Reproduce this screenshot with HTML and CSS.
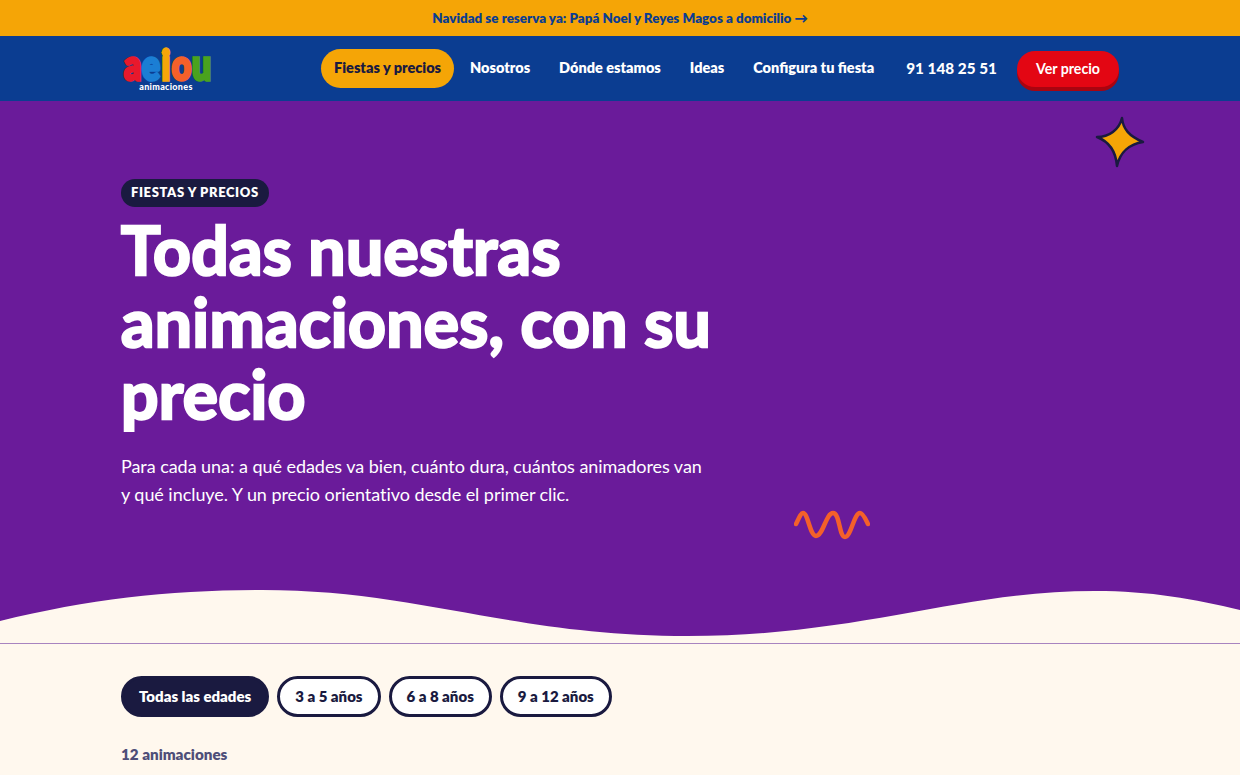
FILE: index.html
```html
<!DOCTYPE html>
<html lang="es">
<head>
  <meta charset="UTF-8" />
  <meta name="viewport" content="width=device-width, initial-scale=1.0"/>
  <title>Fiestas y precios</title>
  <link rel="stylesheet" href="styles.css">
</head>
<body>
  <div class="topbar">Navidad se reserva ya: Papá Noel y Reyes Magos a domicilio →</div>

  <header class="navbar">
    <div class="wrap nav-row">
      <a class="logo" href="#">
        <svg class="logo-star" viewBox="0 0 12 12"><path d="M6 0 C6.5 3.5 8 5 12 6 C8 7 6.5 8.500 6 12 C5.500 8.500 4 7 0 6 C4 5 5.500 3.500 6 0Z"/></svg>
        <span class="logo-word"><span class="l-a">a</span><span class="l-e">e</span><span class="l-i">i</span><span class="l-o">o</span><span class="l-u">u</span></span>
        <span class="logo-sub">animaciones</span>
      </a>
      <nav class="menu">
        <a class="menu-item active" href="#">Fiestas y precios</a>
        <a class="menu-item" href="#">Nosotros</a>
        <a class="menu-item" href="#">Dónde estamos</a>
        <a class="menu-item" href="#">Ideas</a>
        <a class="menu-item" href="#">Configura tu fiesta</a>
      </nav>
      <a class="phone" href="#">91 148 25 51</a>
      <a class="cta" href="#">Ver precio</a>
    </div>
  </header>

  <section class="hero">
    <svg class="star" viewBox="0 0 50 52"><path d="M27 2 C28 13 34 20 48 26 C35 28 25 36 22 50 C21 37 15 26 2 21 C14 21 24 14 27 2Z"/></svg>
    <svg class="squiggle" viewBox="0 0 76 30"><path d="M2 14 C5 8 7 3 9 3 C14 3 16 26 22 26 C29 26 32 3 39 3 C46 3 45 27 51 27 C57 27 60 3 66 3 C69 3 72 10 74 14"/></svg>
    <div class="wrap">
      <span class="tag">FIESTAS Y PRECIOS</span>
      <h1>Todas nuestras animaciones, con su precio</h1>
      <p class="lead">Para cada una: a qué edades va bien, cuánto dura, cuántos animadores van y qué incluye. Y un precio orientativo desde el primer clic.</p>
    </div>
    <svg class="wave" viewBox="0 0 1240 54" preserveAspectRatio="none"><path d="M0 32 C90 10 170 1 262 1 C420 1 510 47 688 47 C860 47 960 2 1095 2 C1150 2 1195 10 1240 21 V54 H0Z"/></svg>
  </section>

  <main class="wrap listing">
    <div class="filters">
      <button class="filter on">Todas las edades</button>
      <button class="filter">3 a 5 años</button>
      <button class="filter">6 a 8 años</button>
      <button class="filter">9 a 12 años</button>
    </div>
    <p class="count">12 animaciones</p>
  </main>
</body>
</html>
```

FILE: styles.css
```css
:root {
  --yellow: #f5a506;
  --blue: #0b3d91;
  --purple: #6a1b9a;
  --cream: #fff8ee;
  --ink: #1a1a40;
  --red: #e30613;
}
* {
  box-sizing: border-box;
}
html, body {
  height: 775px;
  overflow: hidden;
}
body {
  margin: 0;
  font-family: 'Lato', sans-serif;
  background: var(--cream);
  color: var(--ink);
}
a {
  color: inherit;
  text-decoration: none;
}
.wrap {
  width: 998px;
  margin-left: 121px;
}
.topbar {
  height: 36px;
  line-height: 36px;
  background: var(--yellow);
  color: var(--blue);
  text-align: center;
  font-size: 13.400px;
  font-weight: 800;
}
.navbar {
  height: 65px;
  background: var(--blue);
  color: #fff;
}
.nav-row {
  height: 100%;
  display: flex;
  align-items: center;
}
.logo {
  position: relative;
  width: 92px;
  height: 44px;
  margin-top: 2px;
  display: flex;
  flex-direction: column;
  align-items: center;
  flex: none;
}
.logo-star {
  position: absolute;
  top: 0;
  left: 40px;
  width: 9px;
  height: 9px;
  fill: var(--yellow);
}
.logo-word {
  display: flex;
  height: 32px;
  font-size: 42px;
  line-height: 32px;
  font-weight: 900;
  transform: scaleX(0.8);
}
.logo-word span {
  -webkit-text-stroke: 3.500px currentColor;
}
.l-a { color: #e8192c; }
.l-e { color: #1b7ed4; margin-left: 1px; }
.l-i { color: #f6a609; margin: 0 2px; }
.l-o { color: #f4602a; }
.l-u { color: #4aa21e; margin-left: 1px; }
.logo-sub {
  margin-top: 2px;
  margin-left: -2px;
  font-size: 9px;
  line-height: 10px;
  font-weight: 900;
  letter-spacing: 0.300px;
}
.menu {
  display: flex;
  align-items: center;
  gap: 3px;
  margin-left: 108px;
  flex: none;
}
.menu-item {
  height: 39px;
  line-height: 37px;
  padding: 0 13px;
  border-radius: 20px;
  font-size: 14.500px;
  font-weight: 800;
  white-space: nowrap;
}
.menu-item.active {
  background: var(--yellow);
  color: var(--ink);
}
.phone {
  margin-left: 19px;
  margin-bottom: 1px;
  font-size: 15.300px;
  font-weight: 900;
  white-space: nowrap;
}
.cta {
  margin-left: auto;
  width: 102px;
  height: 36px;
  line-height: 36px;
  text-align: center;
  border-radius: 18px;
  background: var(--red);
  box-shadow: 0 4px 0 #a90410;
  font-size: 14.200px;
  font-weight: 700;
}
.hero {
  position: relative;
  height: 543px;
  padding-top: 78px;
  background: var(--purple);
  border-bottom: 1px solid #a884c0;
  color: #fff;
}
.star {
  position: absolute;
  left: 1095px;
  top: 15px;
  width: 50px;
  height: 52px;
  fill: var(--yellow);
  stroke: var(--ink);
  stroke-width: 2.500;
  stroke-linejoin: round;
}
.squiggle {
  position: absolute;
  left: 794px;
  top: 409px;
  width: 76px;
  height: 30px;
  fill: none;
  stroke: #f4602a;
  stroke-width: 4.500;
  stroke-linecap: round;
}
.wave {
  position: absolute;
  left: 0;
  bottom: 0;
  width: 100%;
  height: 54px;
  fill: var(--cream);
}
.tag {
  display: inline-block;
  height: 28px;
  line-height: 27px;
  padding: 0 10px;
  border-radius: 14px;
  background: var(--ink);
  font-size: 13px;
  font-weight: 800;
  letter-spacing: 0.600px;
}
h1 {
  width: 620px;
  margin: 7px 0 0;
  font-size: 66px;
  line-height: 72px;
  font-weight: 700;
  letter-spacing: 0.300px;
  -webkit-text-stroke: 2.500px #fff;
}
.lead {
  width: 585px;
  margin: 22px 0 0;
  font-size: 18px;
  line-height: 28px;
  letter-spacing: -0.050px;
}
.listing {
  padding-top: 32px;
}
.filters {
  display: flex;
  gap: 8px;
}
.filter {
  height: 41px;
  padding: 0 15px 2px;
  border: 3px solid var(--ink);
  border-radius: 21px;
  background: #fff;
  color: var(--ink);
  font-family: inherit;
  font-size: 15px;
  font-weight: 800;
}
.filter.on {
  background: var(--ink);
  color: #fff;
}
.count {
  margin: 27px 0 0;
  font-size: 15.200px;
  line-height: 20px;
  font-weight: 800;
  color: #4e4e78;
}
```
